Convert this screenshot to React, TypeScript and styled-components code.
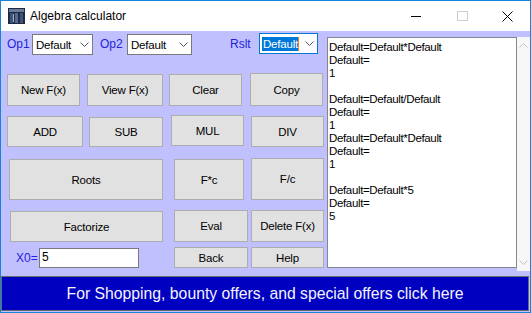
import React from 'react';
import styled, { createGlobalStyle } from 'styled-components';

const GlobalStyle = createGlobalStyle`
  html, body {
    margin: 0;
    padding: 0;
    overflow: hidden;
    background: #ffffff;
  }
  * {
    box-sizing: border-box;
  }
`;

const Window = styled.div`
  width: 531px;
  height: 313px;
  border: 1px solid #1883d7;
  background: #c0c0ff;
  display: flex;
  flex-direction: column;
  font-family: 'Liberation Sans', Arial, sans-serif;
  overflow: hidden;
`;

const TitleBar = styled.div`
  height: 30px;
  flex: none;
  background: #ffffff;
  display: flex;
  align-items: center;
`;

const AppIcon = styled.svg`
  margin-left: 7px;
  flex: none;
`;

const Title = styled.div`
  margin-left: 5px;
  font-size: 12px;
  color: #000;
  flex: 1;
`;

const CaptionButton = styled.div<{ $w: number }>`
  width: ${({ $w }) => $w}px;
  height: 30px;
  display: flex;
  align-items: center;
  justify-content: center;
`;

const Client = styled.div`
  flex: 1;
  display: flex;
  flex-direction: column;
`;

const Main = styled.div`
  height: 245px;
  flex: none;
  display: flex;
`;

const LeftPanel = styled.div`
  width: 326px;
  flex: none;
  display: flex;
  flex-direction: column;
`;

const Row = styled.div<{ $mt: number; $h: number }>`
  margin-top: ${({ $mt }) => $mt}px;
  height: ${({ $h }) => $h}px;
  display: flex;
  align-items: flex-start;
  flex: none;
`;

const Label = styled.div<{ $ml: number; $w: number; $h: number }>`
  margin-left: ${({ $ml }) => $ml}px;
  width: ${({ $w }) => $w}px;
  height: ${({ $h }) => $h}px;
  display: flex;
  align-items: center;
  font-size: 12px;
  color: #2323dc;
  flex: none;
`;

const Combo = styled.div<{ $w: number; $mt: number; $focused?: boolean }>`
  width: ${({ $w }) => $w}px;
  height: 21px;
  margin-top: ${({ $mt }) => $mt}px;
  background: #fff;
  border: 1px solid ${({ $focused }) => ($focused ? '#0078d7' : '#7a7a7a')};
  display: flex;
  align-items: center;
  padding-left: 2px;
  padding-right: 3px;
  font-size: 11.5px;
  letter-spacing: -0.2px;
  color: #000;
  flex: none;

  svg {
    flex: none;
  }
`;

const ComboText = styled.span<{ $selected?: boolean }>`
  flex: 1;
  display: flex;
  align-items: center;
  white-space: nowrap;
  span {
    padding: 1px 0 1px 1px;
    background: ${({ $selected }) => ($selected ? '#0078d7' : 'transparent')};
    color: ${({ $selected }) => ($selected ? '#fff' : '#000')};
    border-right: ${({ $selected }) => ($selected ? '1px solid #f08030' : 'none')};
  }
`;

const Button = styled.div<{ $ml: number; $w: number; $h: number; $mt?: number }>`
  margin-left: ${({ $ml }) => $ml}px;
  margin-top: ${({ $mt }) => $mt ?? 0}px;
  width: ${({ $w }) => $w}px;
  height: ${({ $h }) => $h}px;
  background: #e1e1e1;
  border: 1px solid #adadad;
  display: flex;
  align-items: center;
  justify-content: center;
  font-size: 11.5px;
  letter-spacing: -0.2px;
  color: #000;
  flex: none;
`;

const TextInput = styled.div<{ $w: number; $mt: number }>`
  width: ${({ $w }) => $w}px;
  height: 20px;
  margin-top: ${({ $mt }) => $mt}px;
  background: #fff;
  border: 1px solid #7a7a7a;
  padding: 1px 2px;
  font-size: 12px;
  color: #000;
  flex: none;
`;

const RightPanel = styled.div`
  flex: 1;
  display: flex;
  padding-top: 6px;
`;

const OutputBox = styled.div`
  width: 190px;
  height: 231px;
  background: #fff;
  border: 1px solid #828790;
  padding: 3px 1px;
  font-size: 11.5px;
  letter-spacing: -0.35px;
  line-height: 13px;
  color: #000;
  white-space: pre;
  overflow: hidden;
`;

const ScrollBar = styled.div`
  width: 13px;
  height: 234px;
  background: #f7f7f7;
  display: flex;
  flex-direction: column;
  justify-content: space-between;
  align-items: center;
  padding: 6px 0 6px;
`;

const AdBar = styled.div`
  height: 35px;
  flex: none;
  margin-right: 1px;
  background: #0000c0;
  border: 1px solid #6a6a6a;
  display: flex;
  align-items: center;
  justify-content: center;
  color: #f4f4ff;
  font-size: 15.75px;
`;

const Chevron = ({ color = '#555' }: { color?: string }) => (
  <svg width="9" height="5" viewBox="0 0 9 5">
    <path d="M0.5 0.5 L4.5 4.5 L8.5 0.5" fill="none" stroke={color} strokeWidth="1" />
  </svg>
);

const outputLines = [
  'Default=Default*Default',
  'Default=',
  '1',
  '',
  'Default=Default/Default',
  'Default=',
  '1',
  'Default=Default*Default',
  'Default=',
  '1',
  '',
  'Default=Default*5',
  'Default=',
  '5',
];

function App() {
  return (
    <>
      <GlobalStyle />
      <Window>
        <TitleBar>
          <AppIcon width="17" height="16" viewBox="0 0 17 16">
            <rect x="0" y="0" width="17" height="16" fill="#1d2b45" />
            <rect x="1" y="1" width="15" height="3" fill="#6b7c99" />
            <rect x="2" y="5" width="3" height="10" fill="#3f5477" />
            <rect x="7" y="5" width="3" height="10" fill="#556a8f" />
            <rect x="12" y="5" width="3" height="10" fill="#3f5477" />
            <rect x="5" y="6" width="1" height="8" fill="#a3b1c9" />
          </AppIcon>
          <Title>Algebra calculator</Title>
          <CaptionButton $w={46}>
            <svg width="10" height="10" viewBox="0 0 10 10">
              <line x1="0" y1="5.5" x2="10" y2="5.5" stroke="#000" strokeWidth="1" />
            </svg>
          </CaptionButton>
          <CaptionButton $w={46}>
            <svg width="11" height="10" viewBox="0 0 11 10">
              <rect x="0.5" y="0.5" width="10" height="9" fill="none" stroke="#cccccc" strokeWidth="1" />
            </svg>
          </CaptionButton>
          <CaptionButton $w={45}>
            <svg width="11" height="11" viewBox="0 0 11 11">
              <path d="M0.5 0.5 L10.5 10.5 M10.5 0.5 L0.5 10.5" stroke="#000" strokeWidth="1" />
            </svg>
          </CaptionButton>
        </TitleBar>
        <Client>
          <Main>
            <LeftPanel>
              <Row $mt={2} $h={22}>
                <Label $ml={6} $w={25} $h={22}>Op1</Label>
                <Combo $w={61} $mt={1}>
                  <ComboText><span>Default</span></ComboText>
                  <Chevron />
                </Combo>
                <Label $ml={7} $w={27} $h={22}>Op2</Label>
                <Combo $w={65} $mt={1}>
                  <ComboText><span>Default</span></ComboText>
                  <Chevron />
                </Combo>
                <Label $ml={38} $w={29} $h={22}>Rslt</Label>
                <Combo $w={59} $mt={0} $focused>
                  <ComboText $selected><span>Default</span></ComboText>
                  <Chevron />
                </Combo>
              </Row>
              <Row $mt={18} $h={33}>
                <Button $ml={6} $w={73} $h={32} $mt={1}>New F(x)</Button>
                <Button $ml={7} $w={76} $h={32} $mt={1}>View F(x)</Button>
                <Button $ml={6} $w={73} $h={32} $mt={1}>Clear</Button>
                <Button $ml={8} $w={73} $h={33}>Copy</Button>
              </Row>
              <Row $mt={9} $h={32}>
                <Button $ml={6} $w={76} $h={31} $mt={1}>ADD</Button>
                <Button $ml={6} $w={74} $h={30} $mt={2}>SUB</Button>
                <Button $ml={8} $w={73} $h={31}>MUL</Button>
                <Button $ml={7} $w={73} $h={31} $mt={1}>DIV</Button>
              </Row>
              <Row $mt={11} $h={42}>
                <Button $ml={8} $w={154} $h={41} $mt={1}>Roots</Button>
                <Button $ml={11} $w={70} $h={41} $mt={1}>F*c</Button>
                <Button $ml={7} $w={73} $h={42}>F/c</Button>
              </Row>
              <Row $mt={10} $h={32}>
                <Button $ml={9} $w={153} $h={31} $mt={1}>Factorize</Button>
                <Button $ml={11} $w={74} $h={32}>Eval</Button>
                <Button $ml={3} $w={73} $h={32}>Delete F(x)</Button>
              </Row>
              <Row $mt={5} $h={21}>
                <Label $ml={15} $w={23} $h={22}>X0=</Label>
                <TextInput $w={100} $mt={1}>5</TextInput>
                <Button $ml={35} $w={74} $h={21}>Back</Button>
                <Button $ml={3} $w={73} $h={21}>Help</Button>
              </Row>
            </LeftPanel>
            <RightPanel>
              <OutputBox>{outputLines.join('\n')}</OutputBox>
              <ScrollBar>
                <svg width="9" height="5" viewBox="0 0 9 5">
                  <path d="M0.5 4.5 L4.5 0.5 L8.5 4.5" fill="none" stroke="#c2c2c2" strokeWidth="1" />
                </svg>
                <Chevron color="#c2c2c2" />
              </ScrollBar>
            </RightPanel>
          </Main>
          <AdBar>For Shopping, bounty offers, and special offers click here</AdBar>
        </Client>
      </Window>
    </>
  );
}

export default App;
